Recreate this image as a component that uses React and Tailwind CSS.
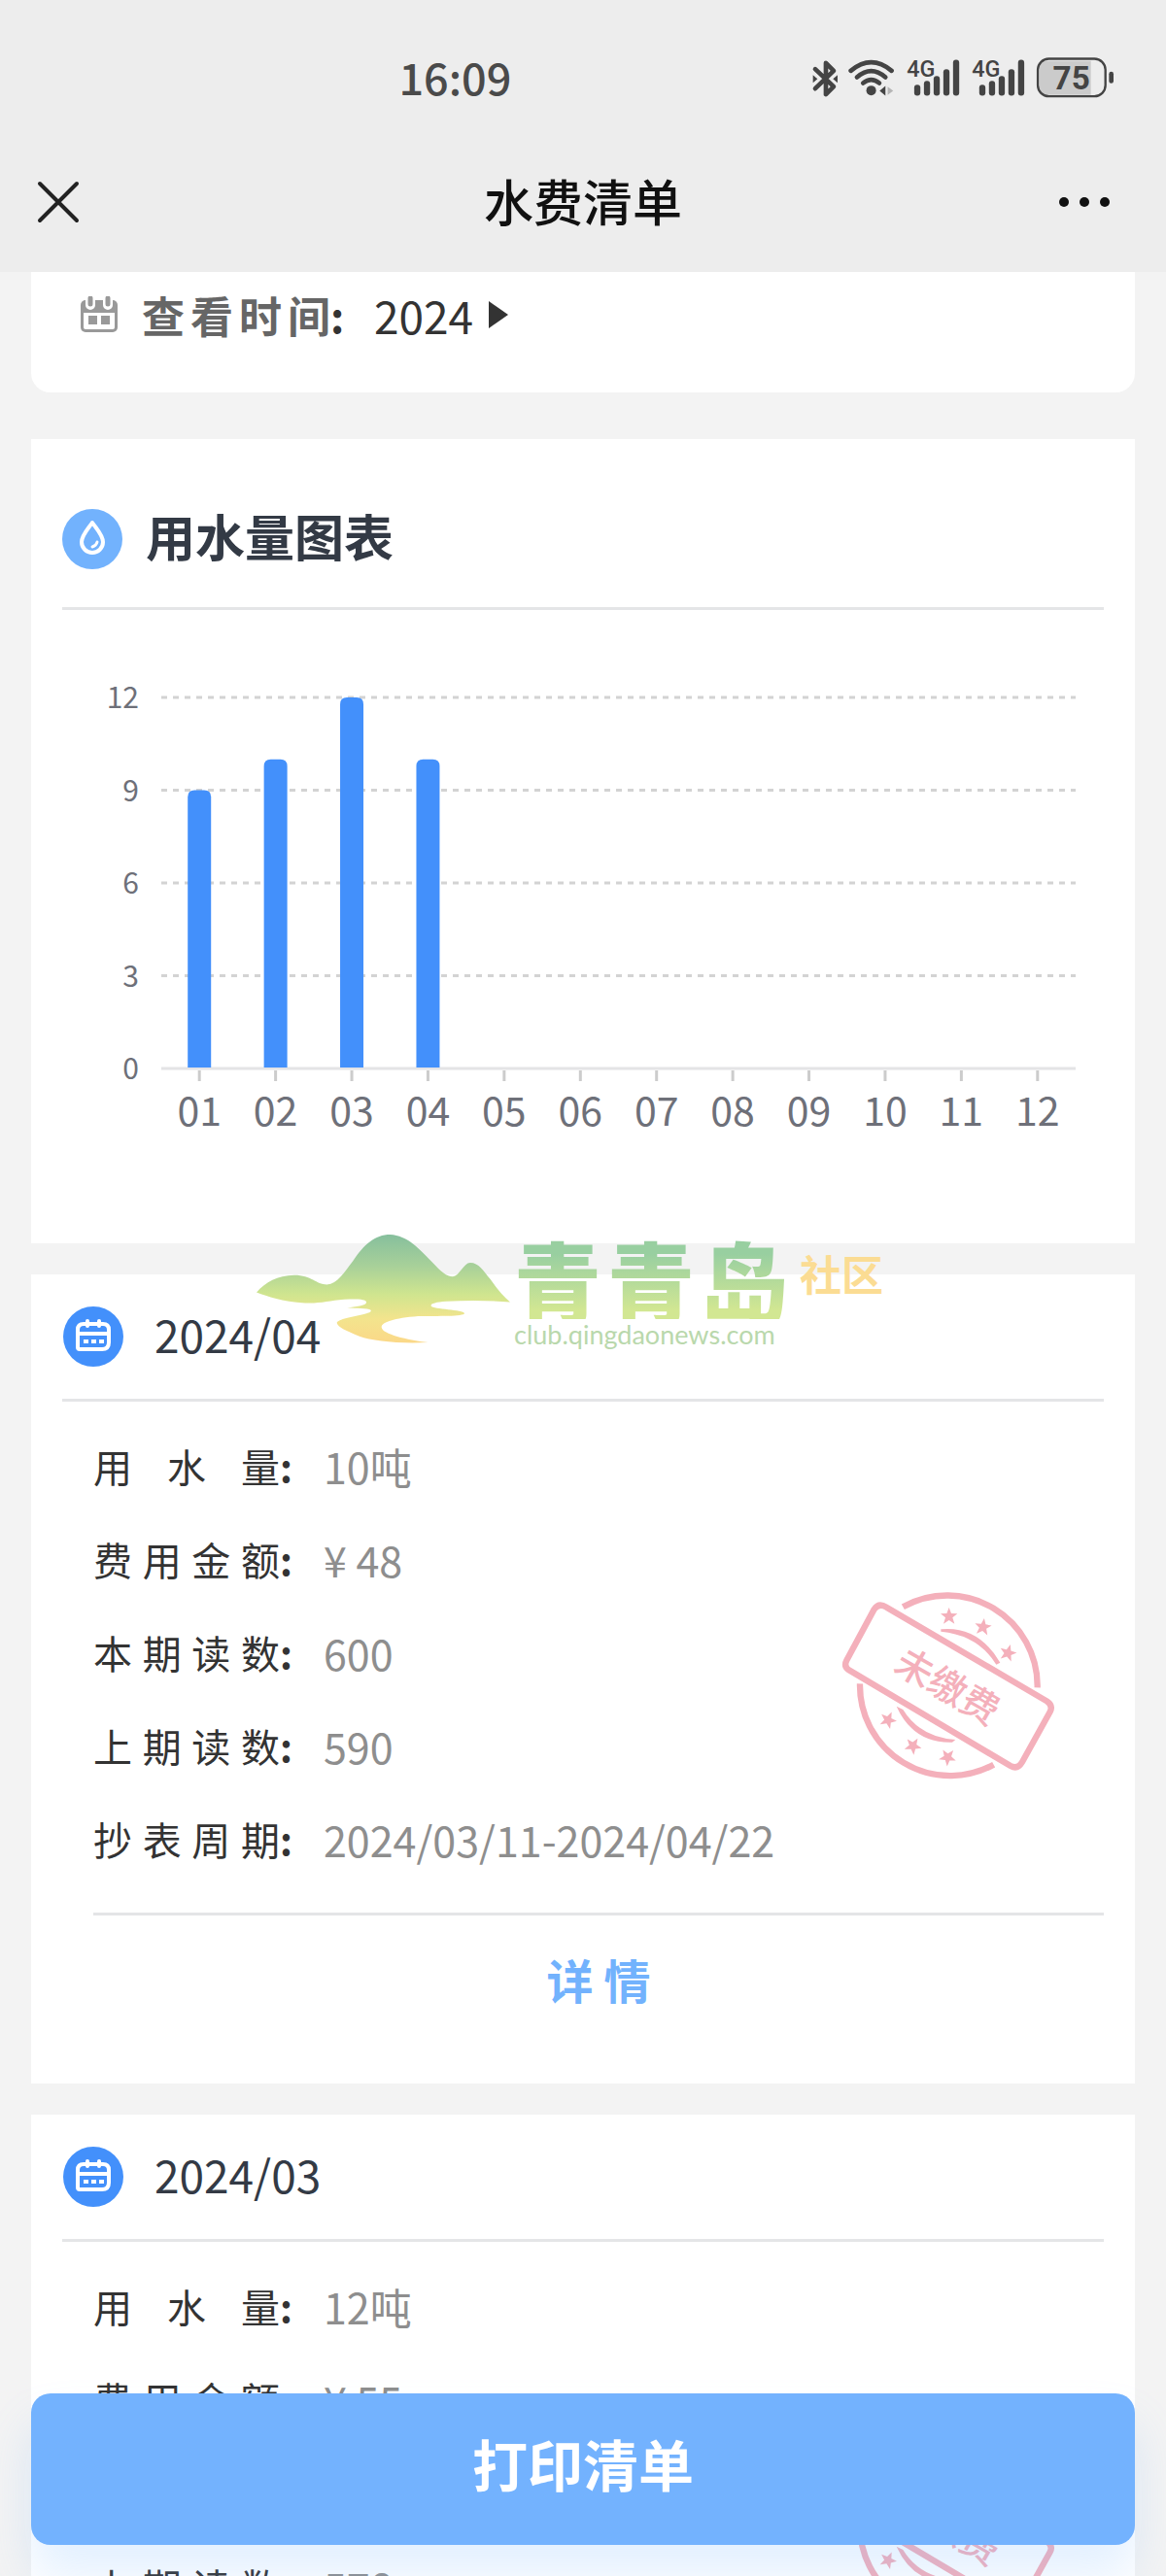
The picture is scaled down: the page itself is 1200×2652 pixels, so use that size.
import { useState } from "react";

const months = ["01", "02", "03", "04", "05", "06", "07", "08", "09", "10", "11", "12"];
const usage = [9, 10, 12, 10];

const bills = [
  {
    month: "2024/04",
    rows: [
      ["用水量", "10吨"],
      ["费用金额", "¥ 48"],
      ["本期读数", "600"],
      ["上期读数", "590"],
      ["抄表周期", "2024/03/11-2024/04/22"],
    ],
  },
  {
    month: "2024/03",
    rows: [
      ["用水量", "12吨"],
      ["费用金额", "¥ 55"],
      ["本期读数", "590"],
      ["上期读数", "578"],
      ["抄表周期", "2024/01/11-2024/03/11"],
    ],
  },
];

const Signal = ({ x }) => (
  <g>
    <text x={x} y="117" fontSize="70" fontWeight="500" fill="#444" fontFamily="Roboto">
      4G
    </text>
    {[140, 128, 113, 92, 63].map((top, i) => (
      <rect key={top} x={x + 23 + i * 30} y={top} width="19" height={174 - top} rx="9" fill="#444" />
    ))}
  </g>
);

const StatusIcons = () => (
  <svg viewBox="160 50 940 140" className="h-[47px] w-[313px]" fill="none" stroke="#444" aria-hidden="true">
    {/* 蓝牙 */}
    <path
      d="M175 92 L232 146 L208 170 V73 L232 97 L175 152"
      strokeWidth="14"
      strokeLinejoin="round"
      strokeLinecap="round"
    />
    <path d="M168 110 L182 122 L168 134Z M244 110 L230 122 L244 134Z" fill="#444" stroke="none" />
    {/* WiFi */}
    <g strokeWidth="14" strokeLinecap="round">
      <path d="M285 97 Q348 45 411 97" />
      <path d="M304 117 Q348 79 392 117" />
      <path d="M323 135 Q348 115 373 135" />
    </g>
    <circle cx="348" cy="158" r="15" fill="#444" stroke="none" />
    <path d="M392 144 V174 L374 159Z" fill="#444" stroke="none" />
    <path d="M399 146 V172 L416 159Z" fill="#b5b5b5" stroke="none" />
    <g stroke="none">
      <Signal x={458} />
      <Signal x={659} />
    </g>
    {/* 电量 */}
    <path d="M890 67 H1027 V172 H890 Q868 172 868 146 V93 Q868 67 890 67Z" fill="#cbcbcb" stroke="none" />
    <rect x="863" y="60" width="209" height="116" rx="34" strokeWidth="7" />
    <rect x="1083" y="100" width="14" height="36" rx="7" fill="#444" stroke="none" />
    <text x="967" y="155" fontSize="100" fontWeight="700" fill="#444" stroke="none" textAnchor="middle" fontFamily="Roboto">
      75
    </text>
  </svg>
);

const Header = () => (
  <header className="shrink-0 bg-[#ededed] pb-6">
    <div className="flex h-40 items-center justify-between pr-[53px] pl-[34.2%]">
      <span className="pb-1 text-[45px] leading-none font-medium text-[#4a4a4a]">16:09</span>
      <StatusIcons />
    </div>
    <div className="grid h-24 grid-cols-3 items-center px-9">
      <button aria-label="关闭" className="w-12">
        <svg viewBox="0 0 48 48" className="size-12" stroke="#222" strokeWidth="4" strokeLinecap="round">
          <path d="M5 5 L43 43 M43 5 L5 43" />
        </svg>
      </button>
      <h1 className="pb-1 text-center text-[51px] leading-none font-medium text-[#111]">水费清单</h1>
      <button aria-label="更多" className="flex items-center justify-self-end gap-[11px] pr-[22px]">
        <i className="size-[10px] rounded-full bg-[#111]" />
        <i className="size-[10px] rounded-full bg-[#111]" />
        <i className="size-[10px] rounded-full bg-[#111]" />
      </button>
    </div>
  </header>
);

const UsageChart = () => {
  const step = 941 / 12;
  const yOf = (v) => 472 - (v / 12) * 382;

  return (
    <svg viewBox="0 0 1072 652" className="block w-full" role="img" aria-label="用水量图表">
      {[12, 9, 6, 3, 0].map((v) => (
        <g key={v}>
          <line
            x1="102"
            x2="1043"
            y1={yOf(v)}
            y2={yOf(v)}
            stroke={v ? "#d3d3d3" : "#e4e4e6"}
            strokeWidth="3"
            strokeDasharray={v ? "6 6" : undefined}
          />
          <text x="79" y={yOf(v) + 11} fontSize="30" fill="#6e7079" textAnchor="end">
            {v}
          </text>
        </g>
      ))}
      {months.map((m, i) => {
        const x = 102 + step * (i + 0.5);
        return (
          <g key={m}>
            <line x1={x} x2={x} y1="474" y2="485" stroke="#ccc" strokeWidth="3" />
            <text x={x} y="531" fontSize="41" fill="#6e7079" textAnchor="middle">
              {m}
            </text>
          </g>
        );
      })}
      {usage.map((v, i) => {
        const x = 102 + step * (i + 0.5) - 12;
        const y = yOf(v);
        return (
          <path
            key={i}
            d={`M${x} 471 V${y + 7} q0 -7 7 -7 h10 q7 0 7 7 V471 Z`}
            fill="#4390fb"
          />
        );
      })}
    </svg>
  );
};

const star = "M0 -27 L7 -9 L26 -8 L11 4 L17 23 L0 12 L-17 23 L-11 4 L-26 -8 L-7 -9Z";

const UnpaidStamp = () => (
  <svg
    viewBox="0 0 810 750"
    className="absolute top-[298px] right-[58px] w-[270px]"
    fill="none"
    stroke="#f4b0bb"
    strokeWidth="19"
    role="img"
    aria-label="未缴费"
  >
    <path d="M268 133 A279 279 0 0 1 683 382" />
    <path d="M135 370 A279 279 0 0 0 548 620" />
    <path
      d="M217 134 L712 424 Q732 437 722 457 L636 612 Q622 636 600 624 L101 328 Q84 317 94 298 L179 140 Q193 119 217 134Z"
    />
    <g fill="#f4b0bb" stroke="none">
      <path d="M385 202 Q500 190 568 305 L556 311 Q500 220 385 209Z" />
      <path d="M248 440 L268 450 Q320 535 430 543 L420 551 Q300 555 248 440Z" />
      {[
        [410, 162],
        [515, 195],
        [592, 275],
        [222, 482],
        [299, 562],
        [406, 597],
      ].map(([x, y], i) => (
        <path key={x} d={star} transform={`translate(${x} ${y}) rotate(${i * 8})`} />
      ))}
      <text
        x="405"
        y="420"
        fontSize="116"
        fontWeight="500"
        textAnchor="middle"
        transform="rotate(30 405 380)"
      >
        未缴费
      </text>
    </g>
  </svg>
);

const CalendarBadge = () => (
  <svg viewBox="0 0 62 62" className="size-[62px]" aria-hidden="true">
    <circle cx="31" cy="31" r="31" fill="#4390fb" />
    <g fill="none" stroke="#fff" strokeWidth="4" strokeLinecap="round" strokeLinejoin="round">
      <path d="M21 18 H41 Q47 18 47 24 V37 Q47 44 40 44 H17 Q15 44 15 42 V24 Q15 18 21 18Z" />
      <path d="M16 28 H46 M25 15 V20 M37 15 V20" />
    </g>
    <path d="M21 34 H26 V38 H21Z M29 34 H34 V38 H29Z M37 34 H42 V38 H37Z" fill="#fff" />
  </svg>
);

const BillCard = ({ bill }) => (
  <section className="relative bg-white px-8 pb-10">
    <div className="flex h-[131px] items-center gap-8 border-b-3 border-[#e4e5e7] pl-px">
      <CalendarBadge />
      <h2 className="pb-1.5 text-[46px] leading-none text-[#333a45]">{bill.month}</h2>
    </div>
    <div className="pt-5 pl-8">
      <dl>
        {bill.rows.map(([label, value]) => (
          <div key={label} className="flex h-24 items-center pb-1">
            <dt className="flex w-[237px] text-[40px] text-[#333]">
              <span className="w-[192px] [text-align-last:justify]">{label}</span>
              <span className="font-bold">:</span>
            </dt>
            <dd className="text-[43px] text-[#8e8e8e]">{value}</dd>
          </div>
        ))}
      </dl>
      <button className="mt-[26px] block h-[136px] w-full border-t-3 border-[#e4e5e7] pb-1 text-center text-[48px] font-bold text-[#72b2fd]">
        详 情
      </button>
    </div>
    <UnpaidStamp />
  </section>
);

const Watermark = () => (
  <div className="pointer-events-none absolute top-[990px] left-[264px] flex">
    <svg viewBox="53 60 584 340" preserveAspectRatio="none" className="h-[113px] w-[261px]" aria-hidden="true">
      <defs>
        <linearGradient id="hill" x1="0" y1="0" x2="0" y2="1">
          <stop offset="0" stopColor="#86bf9d" />
          <stop offset="0.3" stopColor="#a9d199" />
          <stop offset="0.55" stopColor="#cfe58f" />
          <stop offset="0.78" stopColor="#f3e48d" />
          <stop offset="1" stopColor="#fbd888" />
        </linearGradient>
      </defs>
      <path
        fill="url(#hill)"
        d="M53 242 C75 210 100 190 140 189 C180 189 190 218 215 218 C240 215 255 180 275 145 C300 95 325 63 361 63 C400 65 430 110 455 145 C480 180 490 193 505 193 C520 192 530 150 545 150 C565 150 575 175 592 202 C605 228 620 252 637 272 C590 267 540 266 490 270 C465 272 453 278 455 284 C460 295 530 295 532 307 C530 318 470 315 425 316 C370 322 340 335 341 350 C343 372 400 388 448 397 C380 402 320 392 290 378 C260 362 240 350 238 337 C240 325 275 318 300 310 C315 305 318 302 316 297 C310 290 280 292 262 290 C280 285 307 284 306 272 C305 262 280 262 255 264 C220 268 200 277 165 275 C110 270 80 255 53 242Z"
      />
    </svg>
    <div className="pt-1 pl-1">
      <div className="w-[282px] bg-linear-to-b from-[#98cfa0] from-20% to-[#d2e792] to-90% bg-clip-text text-[90px] leading-[84px] font-black text-transparent [text-align-last:justify]">
        青青岛
      </div>
      <div className="font-[Lato,sans-serif] text-[27px] leading-8 text-[#b9d8ac]">club.qingdaonews.com</div>
    </div>
    <div className="pt-4 pl-3 text-[43px] leading-[48px] font-bold text-[#fbdc93]">社区</div>
  </div>
);

const App = () => {
  const [year] = useState("2024");

  return (
    <div className="flex h-screen flex-col bg-[#f3f3f3] font-['Noto_Sans_CJK_SC',sans-serif]">
      <Header />
      <main className="relative min-h-0 flex-1 overflow-y-auto px-8 [scrollbar-width:none]">
        <section className="rounded-b-[20px] bg-white pb-9">
          <div className="flex h-[88px] items-center pl-[50px]">
            <svg viewBox="0 0 40 38" className="w-10" aria-hidden="true">
              <rect x="1" y="4" width="38" height="33" rx="5" fill="#999" />
              <path d="M4 17 H36 V32 Q36 34 34 34 H6 Q4 34 4 32Z" fill="#fff" />
              <path d="M11 0 V9 M29 0 V9" stroke="#fff" strokeWidth="10" strokeLinecap="round" />
              <path d="M11 2 V8 M29 2 V8" stroke="#999" strokeWidth="5" strokeLinecap="round" />
              <path d="M9 20 H18 V29 H9Z M22 20 H31 V29 H22Z" fill="#999" />
            </svg>
            <span className="ml-6 w-[194px] text-[44px] font-bold text-[#666] [text-align-last:justify]">查看时间</span>
            <span className="w-[45px] text-[44px] font-bold text-[#333]">:</span>
            <button className="flex items-center gap-4 text-[46px] leading-none text-[#333]">
              {year}
              <svg viewBox="0 0 20 28" className="h-7 w-5" fill="#333" aria-hidden="true">
                <path d="M0 0 L20 14 L0 28Z" />
              </svg>
            </button>
          </div>
        </section>

        <section className="mt-12 bg-white px-8 pt-8">
          <div className="flex h-[144px] items-center gap-6 border-b-3 border-[#e4e5e7]">
            <svg viewBox="0 0 62 62" className="size-[62px]" aria-hidden="true">
              <circle cx="31" cy="31" r="31" fill="#72b2fd" />
              <path
                d="M31 14 C27 20 20 27 20 34 A11 11 0 0 0 42 34 C42 27 35 20 31 14Z"
                fill="none"
                stroke="#fff"
                strokeWidth="4"
                strokeLinejoin="round"
              />
              <path d="M36 34 Q35 38 31 39" fill="none" stroke="#fff" strokeWidth="3" strokeLinecap="round" />
            </svg>
            <h2 className="pb-1.5 text-[51px] leading-none font-bold text-[#333a45]">用水量图表</h2>
          </div>
          <UsageChart />
        </section>

        <div className="mt-8 flex flex-col gap-8 pb-60">
          {bills.map((bill) => (
            <BillCard key={bill.month} bill={bill} />
          ))}
        </div>

        <Watermark />
      </main>

      <button className="fixed inset-x-8 bottom-8 h-[156px] rounded-[20px] bg-[#73b2fe] pb-3 text-[57px] font-bold text-white shadow-[0_32px_48px_rgba(115,178,254,0.2)]">
        打印清单
      </button>
    </div>
  );
};

export default App;
